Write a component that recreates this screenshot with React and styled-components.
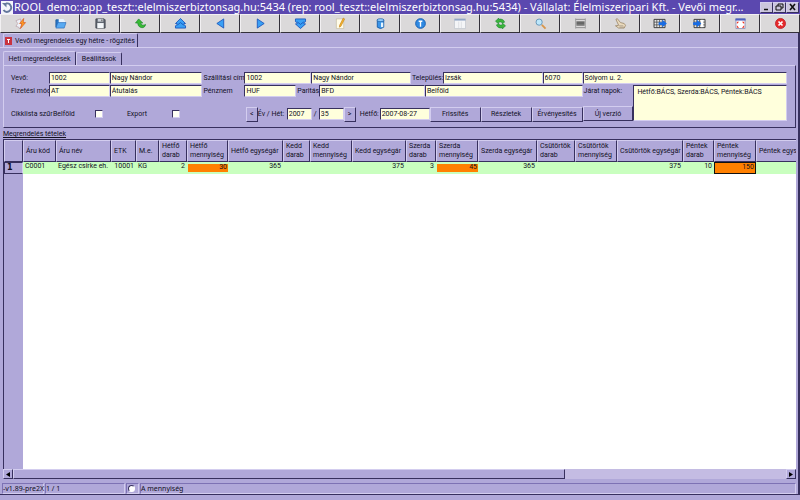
import React from "react";
import styled, { createGlobalStyle, css } from "styled-components";

const c = {
  face: "#b0a8d9",
  light: "#d3cdef",
  mid: "#7d72b4",
  dark: "#37305e",
  field: "#ffffdc",
  ink: "#12101f",
  title: "#5b48af",
};

const Global = createGlobalStyle`
  * { box-sizing: border-box; }
  body { margin: 0; background: ${c.face}; color: ${c.ink}; font: 7px/10px Roboto, "Liberation Sans", Arial, sans-serif; }
  button, input, textarea { font: inherit; color: inherit; border-radius: 0; margin: 0; }
`;

const raised = css`
  border: 1px solid;
  border-color: ${c.light} ${c.dark} ${c.dark} ${c.light};
`;
const sunken = css`
  border: 1px solid;
  border-color: ${c.dark} ${c.light} ${c.light} ${c.dark};
`;

const Window = styled.div`
  min-height: 100vh;
  display: flex;
  flex-direction: column;
  background: ${c.face};
`;
const TitleBar = styled.header`
  display: flex;
  align-items: center;
  height: 14px;
  padding: 0 1px;
  gap: 1px;
  background: ${c.title};
  color: #fff;
`;
const TitleText = styled.h1`
  flex: 1;
  min-width: 0;
  margin: 0;
  overflow: hidden;
  white-space: nowrap;
  font: 11px/14px "Noto Sans", sans-serif;
`;
const Logo = styled.svg`
  width: 12px;
  height: 13px;
  background: #f4f4fb;
`;
const TitleButtons = styled.div`
  display: flex;
`;
const TitleButton = styled.button`
  ${raised}
  width: 13px;
  height: 11px;
  padding: 0;
  display: grid;
  place-items: center;
  background: #cbc6dc;
  svg { width: 9px; height: 8px; }
`;
const Toolbar = styled.nav`
  display: grid;
  grid-template-columns: repeat(20, 1fr);
  height: 19px;
  background: #dbd9da;
`;
const Tool = styled.button`
  display: grid;
  place-items: center;
  padding: 0;
  border: 1px solid;
  border-color: #f2f0f2 #34313a #34313a #f2f0f2;
  background: #dbd9da;
  svg { width: 11px; height: 11px; overflow: visible; }
  svg.wide { width: 14px; }
`;
const Body = styled.main`
  flex: 1;
  display: flex;
  flex-direction: column;
  border-right: 2px solid ${c.dark};
  border-bottom: 1px solid ${c.dark};
  margin-bottom: 5px;
  padding: 0 2px 0 3px;
`;
const DocTabs = styled.div`
  height: 15px;
  display: flex;
  margin: 0 -2px 0 -3px;
  padding-left: 3px;
  border-bottom: 1px solid ${c.light};
`;
const TabStrip = styled.div`
  height: 14px;
  margin-top: 3px;
  display: flex;
  align-items: flex-end;
`;
const Tab = styled.button`
  display: flex;
  align-items: center;
  justify-content: ${(p) => (p.$doc ? "flex-start" : "center")};
  gap: 3px;
  width: ${(p) => p.$width}px;
  height: ${(p) => (p.$active ? 14 : 13)}px;
  padding: 0 1px;
  background: ${c.face};
  border: 1px solid;
  border-color: ${c.light} ${c.dark} transparent ${c.light};
  border-radius: 2px 2px 0 0;
  border-bottom: 0;
  white-space: nowrap;
  svg { flex: none; width: 7px; height: 8px; }
`;
const Panel = styled.section`
  height: 63px;
  padding: 6px 8px 0 5px;
  border: 1px solid;
  border-color: ${c.light} ${c.dark} ${c.dark} ${c.light};
`;
const Form = styled.form`
  display: grid;
  grid-template-columns: minmax(0, 575fr) minmax(0, 205fr);
  row-gap: 1px;
`;
const Line = styled.div`
  display: grid;
  align-items: center;
  height: ${(p) => p.$height || 12}px;
  grid-template-columns: ${(p) => p.$cols.map((n) => `minmax(0, ${n}fr)`).join(" ")};
`;
const Side = styled.div`
  grid-column: 2;
  grid-row: 2 / 4;
  display: grid;
  grid-template-columns: minmax(0, 51fr) minmax(0, 154fr);
  grid-template-rows: 12px 24px;
  align-items: center;
  align-content: start;
`;
const Label = styled.label`
  white-space: nowrap;
  padding-left: ${(p) => p.$pad ?? 2}px;
`;
const Field = styled.input`
  ${sunken}
  width: 100%;
  min-width: 0;
  height: 12px;
  padding: 0 1px;
  background: ${c.field};
`;
const Memo = styled.textarea`
  ${sunken}
  display: block;
  grid-column: 2;
  grid-row: 1 / 3;
  width: 100%;
  height: 36px;
  padding: 1px 3px;
  resize: none;
  background: ${c.field};
`;
const Check = styled.input.attrs({ type: "checkbox" })`
  appearance: none;
  width: 8px;
  height: 8px;
  background: #fffff4;
  border: 1px solid;
  border-color: ${c.dark} ${c.light} ${c.light} ${c.dark};
`;
const Button = styled.button`
  ${raised}
  height: 15px;
  padding: 0;
  background: ${c.face};
  white-space: nowrap;
`;
const NewVersion = styled(Button)`
  grid-column: 1;
  align-self: end;
`;
const Caption = styled.h2`
  margin: 2px 0 0;
  font: inherit;
  line-height: 9px;
  text-decoration: underline;
`;
const GridFrame = styled.div`
  flex: 1;
  overflow: hidden;
  border-left: 1px solid ${c.dark};
  border-top: 1px solid ${c.dark};
  background: linear-gradient(to right, ${c.face} 19px, #fff 19px);
`;
const Table = styled.table`
  table-layout: fixed;
  width: ${(p) => p.$width}px;
  border-collapse: separate;
  border-spacing: 0;
`;
const Th = styled.th`
  height: 22px;
  padding: 0 0 0 2px;
  text-align: left;
  font-weight: 400;
  line-height: 9px;
  white-space: pre;
  background: ${c.face};
  border: 1px solid;
  border-color: ${c.light} ${c.dark} ${c.dark} ${c.light};
`;
const Td = styled.td`
  height: 12px;
  padding: 0 2px;
  line-height: 8px;
  vertical-align: top;
  white-space: nowrap;
  text-align: ${(p) => (p.$num ? "right" : "left")};
  background: #c9ffbf;
  ${(p) => p.$hot && css`
    background: #ff8000;
    border: solid #c9ffbf;
    border-width: 2px 0 2px 1px;
    line-height: 6px;
    padding-right: 1px;
  `}
  ${(p) => p.$focus && css`border: 1px solid #111; line-height: 8px;`}
`;
const RowHead = styled.th`
  padding: 0 2px;
  text-align: left;
  font: bold 8px/10px "DejaVu Sans", sans-serif;
  background: ${c.face};
  border: 1px solid;
  border-color: ${c.dark} ${c.light} ${c.dark} ${c.dark};
`;
const ScrollBar = styled.div`
  display: grid;
  grid-template-columns: 10px minmax(0, 553fr) minmax(0, 221fr) 10px;
  height: 10px;
  background: #c4bce3;
`;
const ScrollPart = styled.button`
  ${raised}
  padding: 0;
  display: grid;
  place-items: center;
  background: ${c.face};
  svg { width: 4px; height: 5px; }
`;
const Status = styled.footer`
  display: grid;
  grid-template-columns: 42px 80px 13px 1fr;
  gap: 1px;
  margin: 4px 0 0 -1px;
  height: 11px;
  font: 7px/9px "Noto Sans", sans-serif;
`;
const StatusCell = styled.div`
  display: flex;
  align-items: center;
  white-space: nowrap;
  border: 1px solid;
  border-color: ${c.mid} ${c.light} ${c.light} ${c.mid};
`;
const Radio = styled.input.attrs({ type: "radio" })`
  appearance: none;
  width: 7px;
  height: 7px;
  margin-left: 1px;
  border-radius: 50%;
  background: #fff;
  border: 1px solid;
  border-color: ${c.dark} #fff #fff ${c.dark};
`;

const Svg = ({ wide, children }) => (
  <svg viewBox={wide ? "0 0 15 12" : "0 0 12 12"} className={wide ? "wide" : undefined} aria-hidden="true">{children}</svg>
);
const blue = { fill: "#3aa0f5", stroke: "#1450b8", strokeWidth: 0.9, strokeLinejoin: "round" };
const TableGlyph = ({ left }) => (
  <Svg wide>
    <path d="M1 1.500h12v9H1z" fill="#e7e7e7" stroke="#333" />
    <path d="M1 4.500h12M1 7.500h12M4 1.500v9M7 1.500v9M10 1.500v9" stroke="#444" strokeWidth=".8" />
    {left && <path d="M8.500 2h2.500v8H8.500z" fill="#fff" />}
    <path d={left ? "M0 4.500h4V2l5 4-5 4V7.500H0z" : "M6 4.500h4V2l5 4-5 4V7.500H6z"} fill="#176be4" />
  </Svg>
);

const tools = [
  ["Új", <Svg><path d="M6 1L1 3l2 3-2 3 3 1 1 2 2-4z" fill="#eef1f8" stroke="#b59aa0" strokeWidth=".7" /><path d="M9.500 .5L5 6h2.500L6 11.500 11.500 5H9z" fill="#ff9d20" stroke="#d6521c" strokeWidth=".7" /></Svg>],
  ["Megnyitás", <Svg><path d="M1 10V2h4l1 1h4v3" fill="#2876c7" stroke="#205d9e" /><path d="M4 1h5l2 2v3H4z" fill="#e8f4ff" /><path d="M3 5h9l-2 6H1z" fill="#58aaf2" stroke="#2468b7" strokeWidth=".7" /></Svg>],
  ["Mentés", <Svg><path d="M1 1h9l1 1v9H1z" fill="#606670" stroke="#40444d" /><path d="M3 1h6v3H3z" fill="#ccd1d7" /><path d="M2.500 5.500h7V11h-7z" fill="#f4f7fa" /><path d="M7 1.500h1v2H7z" fill="#444" /></Svg>],
  ["Visszavonás", <Svg><path d="M4 1L.5 5.500H3C3 9 6 11 8.500 10.500 10.500 10 11.500 8.500 11.500 7 9.500 8.500 6.500 8 6.200 5.500H8.500z" fill="#39ba35" stroke="#16832a" strokeWidth=".7" /></Svg>],
  ["Első", <Svg><path d="M6 .5L11.500 6H9.800v1.500L11.500 8.500V11H.5V8.500L2.200 7.500V6H.5z" {...blue} /><path d="M2.500 7.800L6 5l3.500 2.800" fill="none" stroke="#1450b8" strokeWidth=".9" /></Svg>],
  ["Előző", <Svg><path d="M9.500 1v10L2 6z" {...blue} /></Svg>],
  ["Következő", <Svg><path d="M2.500 1v10L10 6z" {...blue} /></Svg>],
  ["Utolsó", <Svg><path d="M6 11.500L.5 6.500h1.700V5L.5 4V1h11v3L9.800 5v1.500h1.700z" {...blue} /><path d="M2.500 4.200L6 7l3.500-2.800" fill="none" stroke="#1450b8" strokeWidth=".9" /></Svg>],
  ["Szerkesztés", <Svg><path d="M1.500 1h8v10.500h-8z" fill="#fffbe7" stroke="#c0b99f" strokeWidth=".7" /><path d="M9 0l1.500 1L6.500 9l-1.700 1 .2-2z" fill="#f5b52a" stroke="#bd7716" strokeWidth=".6" /></Svg>],
  ["Törlés", <Svg><path d="M2.500 2h7v8q-3.500 3-7 0z" fill="#3a95e9" stroke="#195da9" /><ellipse cx="6" cy="2.300" rx="3.800" ry="1.600" fill="#94ceff" stroke="#17579a" strokeWidth=".7" /><path d="M6.500 5h2.500v5H6.500z" fill="#e5f5ff" /></Svg>],
  ["Információ", <Svg><circle cx="6" cy="6" r="5.300" fill="#2f89e2" stroke="#145caf" /><path d="M4 3.500h4M6 3.500v6" stroke="#fff" strokeWidth="1.500" /></Svg>],
  ["Ablak", <Svg wide><path d="M1.500 1h12v10.500h-12z" fill="#f4f5f7" stroke="#c1c5ce" strokeWidth=".8" /><path d="M1.500 .8h12v2h-12z" fill="#93a7c6" /><path d="M6 4v7M9 4v7" stroke="#d4d7dc" strokeWidth=".7" /></Svg>],
  ["Frissítés", <Svg><path d="M10.500 4.500C9.500 1.500 6.500 .5 4 1.500V0L.5 3.500 4 6.500V4.700c2-.8 3-.5 4 .8zM1.500 7.500c1 3 4 4 6.500 3V12l3.500-3.500L8 5.500v1.800c-2 .8-3 .5-4-.8z" fill="#3cb53b" stroke="#15822d" strokeWidth=".6" /></Svg>],
  ["Keresés", <Svg><circle cx="4.500" cy="4.500" r="3.400" fill="#bde7fb" stroke="#6293b6" /><path d="M7.500 7.500l4 4" stroke="#d7964b" strokeWidth="2" /></Svg>],
  ["Nyomtatás", <Svg><path d="M.7 .5v11M11.300 .5v11" stroke="#8a8a8a" strokeWidth=".8" /><path d="M1 1.500h10M1 10.500h10" stroke="#8a8a8a" /><path d="M1.500 3.500h9v5h-9z" fill="#777" /><path d="M2 5.500h8" stroke="#555" /></Svg>],
  ["Kézi", <Svg><path d="M1 1.500l1.500-.8L6 5l4 1 1.500 2-1.500 3H4L.5 8.500 4 8z" fill="#e9d9bd" stroke="#95805f" strokeWidth=".8" /><path d="M4.500 8.500H9M5 10h5" stroke="#8b8174" strokeWidth=".6" /></Svg>],
  ["Export", <TableGlyph />],
  ["Import", <TableGlyph left />],
  ["Teljes nézet", <Svg><path d="M1 1h10v10.500H1z" fill="#fff" stroke="#9195b9" /><path d="M.5 .5h11v2.300H.5z" fill="#4f62c0" /><path d="M2 4h2.500L2 6.500zM10 4v2.500L7.500 4zM2 10.500V8l2.500 2.500zM10 10.500H7.500L10 8z" fill="#ee3425" /></Svg>],
  ["Bezárás", <Svg><circle cx="6" cy="6" r="5.500" fill="#e52a2b" stroke="#b91520" strokeWidth=".8" /><path d="M3.800 3.800l4.400 4.400M8.200 3.800L3.800 8.200" stroke="#fff" strokeWidth="1.800" /></Svg>],
];

const columns = [
  ["Áru kód", 33, "C0001"],
  ["Áru név", 55, "Egész csirke eh."],
  ["ETK", 25, "10001", "num"],
  ["M.e.", 23, "KG"],
  ["Hétfő\ndarab", 28, "2", "num"],
  ["Hétfő\nmennyiség", 41, "30", "hot"],
  ["Hétfő egységár", 55, "365", "num"],
  ["Kedd\ndarab", 27, "", "num"],
  ["Kedd\nmennyiség", 42, "", "num"],
  ["Kedd egységár", 54, "375", "num"],
  ["Szerda\ndarab", 30, "3", "num"],
  ["Szerda\nmennyiség", 42, "45", "hot"],
  ["Szerda egységár", 59, "365", "num"],
  ["Csütörtök\ndarab", 38, "", "num"],
  ["Csütörtök\nmennyiség", 42, "", "num"],
  ["Csütörtök egységár", 66, "375", "num"],
  ["Péntek\ndarab", 31, "10", "num"],
  ["Péntek\nmennyiség", 42, "150", "focus"],
  ["Péntek egységár", 60, "", "num"],
];
const tableWidth = columns.reduce((sum, col) => sum + col[1], 19);

const Input = ({ name, value, label }) => <Field id={name} aria-label={label} defaultValue={value} />;

export default function App() {
  return (
    <Window>
      <Global />
      <TitleBar>
        <Logo viewBox="0 0 12 13" aria-hidden="true">
          <path d="M5 2.500a4.200 4.200 0 1 1-2.500 6.500" fill="none" stroke="#65789c" strokeWidth="1.900" />
          <path d="M1 2h4.500v4.500z" fill="#65789c" />
        </Logo>
        <TitleText>ROOL demo::app_teszt::elelmiszerbiztonsag.hu:5434 (rep: rool_teszt::elelmiszerbiztonsag.hu:5434) - Vállalat: Élelmiszeripari Kft. - Vevői megr...</TitleText>
        <TitleButtons>
          <TitleButton aria-label="Kis méret"><svg viewBox="0 0 9 8"><path d="M2 6.500h4" stroke="#111" strokeWidth="1.500" /></svg></TitleButton>
          <TitleButton aria-label="Előző méret"><svg viewBox="0 0 9 8"><path d="M3 3V1h5v4H6M1 3h5v4H1z" fill="none" stroke="#111" /></svg></TitleButton>
          <TitleButton aria-label="Bezárás"><svg viewBox="0 0 9 8"><path d="M2 1l5 6M7 1L2 7" stroke="#111" strokeWidth="1.600" /></svg></TitleButton>
        </TitleButtons>
      </TitleBar>
      <Toolbar>
        {tools.map(([name, icon]) => <Tool key={name} aria-label={name}>{icon}</Tool>)}
      </Toolbar>
      <Body>
        <DocTabs>
          <Tab $doc $active $width={135}>
            <svg viewBox="0 0 7 8" aria-hidden="true"><path d="M0 0h7v8H0z" fill="#c93340" /><path d="M2 2h3v1H4v3H3V3H2z" fill="#fff" /></svg>
            Vevői megrendelés egy hétre - rögzítés
          </Tab>
        </DocTabs>
        <TabStrip role="tablist">
          <Tab role="tab" aria-selected="true" $active $width={73}>Heti megrendelések</Tab>
          <Tab role="tab" aria-selected="false" $width={46}>Beállítások</Tab>
        </TabStrip>
        <Panel>
          <Form onSubmit={(e) => e.preventDefault()}>
            <Line $cols={[40, 61, 93, 42, 67, 100, 32, 100, 40]}>
              <Label htmlFor="vevo">Vevő:</Label>
              <Input name="vevo" value="1002" />
              <Input label="Vevő neve" value="Nagy Nándor" />
              <Label htmlFor="cim" $pad={1}>Szállítási cím:</Label>
              <Input name="cim" value="1002" />
              <Input label="Szállítási név" value="Nagy Nándor" />
              <Label htmlFor="telepules" $pad={1}>Település:</Label>
              <Input name="telepules" value="Izsák" />
              <Input label="Irányítószám" value="6070" />
            </Line>
            <Field aria-label="Utca" defaultValue="Sólyom u. 2." />
            <Line $cols={[40, 61, 93, 42, 52, 23, 106, 158]}>
              <Label htmlFor="fizetes">Fizetési mód:</Label>
              <Input name="fizetes" value="AT" />
              <Input label="Fizetési mód neve" value="Átutalás" />
              <Label htmlFor="penznem" $pad={1}>Pénznem</Label>
              <Input name="penznem" value="HUF" />
              <Label htmlFor="paritas" $pad={1}>Paritás:</Label>
              <Input name="paritas" value="BFD" />
              <Input label="Paritás neve" value="Belföld" />
            </Line>
            <Side>
              <Label htmlFor="napok" $pad={1}>Járat napok:</Label>
              <NewVersion>Új verzió</NewVersion>
              <Memo id="napok" defaultValue="Hétfő:BÁCS, Szerda:BÁCS, Péntek:BÁCS" />
            </Side>
            <Line $height={32} $cols={[44, 42, 32, 45, 74, 12, 29, 25, 7, 25, 12, 24, 50, 51, 51, 51]}>
              <Label htmlFor="cikk">Cikklista szűr</Label>
              <Label htmlFor="cikk" $pad={0}>Belföld</Label>
              <Check id="cikk" />
              <Label htmlFor="export" $pad={0}>Export</Label>
              <Check id="export" />
              <Button aria-label="Előző hét">&lt;</Button>
              <Label htmlFor="ev" $pad={0}>Év / Hét:</Label>
              <Input name="ev" value="2007" />
              <Label htmlFor="het">/</Label>
              <Input name="het" value="35" />
              <Button aria-label="Következő hét">&gt;</Button>
              <Label htmlFor="hetfo" $pad={4}>Hétfő:</Label>
              <Input name="hetfo" value="2007-08-27" />
              <Button>Frissítés</Button>
              <Button>Részletek</Button>
              <Button>Érvényesítés</Button>
            </Line>
          </Form>
        </Panel>
        <Caption>Megrendelés tételek</Caption>
        <GridFrame>
          <Table $width={tableWidth}>
            <colgroup>
              <col width="19" />
              {columns.map(([name, width]) => <col key={name} width={width} />)}
            </colgroup>
            <thead>
              <tr>
                <Th aria-label="Sor" />
                {columns.map(([name]) => <Th key={name}>{name}</Th>)}
              </tr>
            </thead>
            <tbody>
              <tr>
                <RowHead scope="row">1</RowHead>
                {columns.map(([name, , value, kind]) => (
                  <Td key={name} $num={!!kind} $hot={kind === "hot" || kind === "focus"} $focus={kind === "focus"}>{value}</Td>
                ))}
              </tr>
            </tbody>
          </Table>
        </GridFrame>
        <ScrollBar>
          <ScrollPart aria-label="Balra"><svg viewBox="0 0 4 5"><path d="M4 0v5L0 2.500z" /></svg></ScrollPart>
          <ScrollPart aria-label="Görgetősáv" />
          <span />
          <ScrollPart aria-label="Jobbra"><svg viewBox="0 0 4 5"><path d="M0 0v5l4-2.500z" /></svg></ScrollPart>
        </ScrollBar>
        <Status>
          <StatusCell>-v1.89-pre2X</StatusCell>
          <StatusCell>1 / 1</StatusCell>
          <StatusCell><Radio aria-label="Állapot" /></StatusCell>
          <StatusCell>A mennyiség</StatusCell>
        </Status>
      </Body>
    </Window>
  );
}
